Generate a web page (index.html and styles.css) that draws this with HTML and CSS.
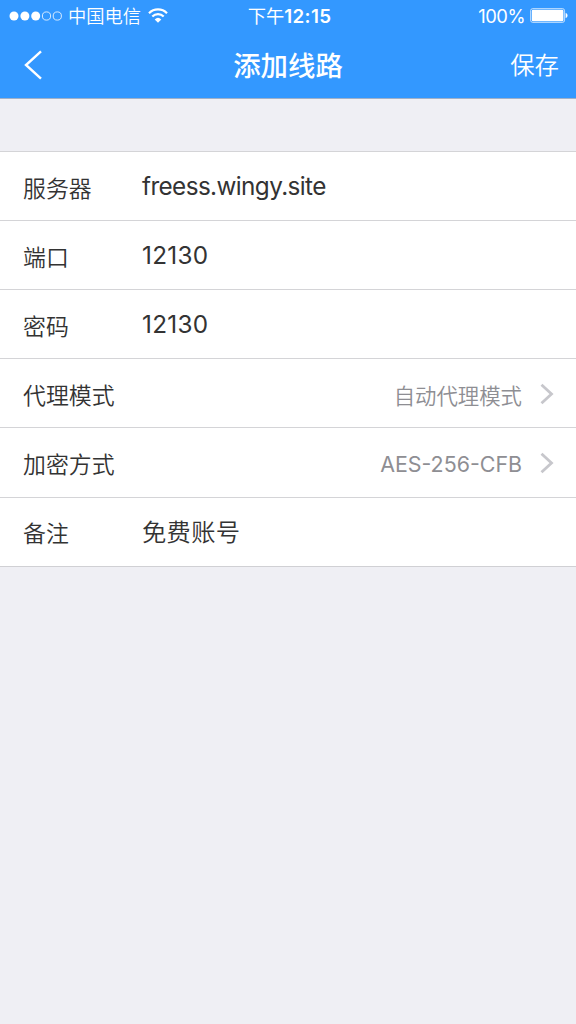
FILE: index.html
```html
<!DOCTYPE html>
<html lang="zh-CN">
<head>
<meta charset="utf-8">
<title>添加线路</title>
<link rel="stylesheet" href="styles.css">
</head>
<body>
<header class="header">
  <div class="status">
    <div class="carrier">
      <svg class="signal" width="54" height="12" viewBox="0 0 54 12">
        <g fill="#fff"><circle cx="5" cy="6" r="4.5"/><circle cx="15.9" cy="6" r="4.5"/><circle cx="26.7" cy="6" r="4.5"/></g>
        <g fill="none" stroke="#fff" stroke-width=".8"><circle cx="37.5" cy="6" r="4.1"/><circle cx="48.3" cy="6" r="4.1"/></g>
      </svg>
      <span class="carrier-name">中国电信</span>
      <svg class="wifi" width="20" height="16" viewBox="0 0 20 16">
        <g fill="none" stroke="#fff" stroke-width="2.2"><path d="M1 5.2a12.6 12.6 0 0 1 18 0"/><path d="M4.3 8.6a8 8 0 0 1 11.4 0"/></g>
        <path d="M6.7 11.4a4.8 4.8 0 0 1 6.6 0L10 14.7z" fill="#fff"/>
      </svg>
    </div>
    <div class="time"><span class="period">下午</span>12:15</div>
    <div class="power">
      <span class="percent">100%</span>
      <svg class="battery" width="38" height="16" viewBox="0 0 38 16">
        <rect x=".6" y=".6" width="34" height="13.8" rx="2.2" fill="none" stroke="#fff" stroke-opacity=".75" stroke-width=".9"/>
        <rect x="1.8" y="1.8" width="31.6" height="11.4" rx="1.2" fill="#fff"/>
        <path d="M35.6 5c2.6.5 2.6 4.5 0 5z" fill="#fff"/>
      </svg>
    </div>
  </div>
  <nav class="nav">
    <svg class="back" width="18" height="30" viewBox="0 0 18 30"><path d="M17 1.4 2 15l15 13.6" fill="none" stroke="#fff" stroke-width="2.4"/></svg>
    <h1 class="title">添加线路</h1>
    <span class="save">保存</span>
  </nav>
</header>
<main class="form">
  <div class="row"><span class="label">服务器</span><span class="value domain">freess.wingy.site</span></div>
  <div class="row"><span class="label">端口</span><span class="value">12130</span></div>
  <div class="row"><span class="label">密码</span><span class="value">12130</span></div>
  <div class="row"><span class="label">代理模式</span><span class="choice">自动代理模式</span><svg class="chevron" width="14" height="22" viewBox="0 0 14 22"><path d="M1.5 1.8 11.5 11l-10 9.2" fill="none" stroke="#c7c7cc" stroke-width="2.8"/></svg></div>
  <div class="row"><span class="label">加密方式</span><span class="choice cipher">AES-256-CFB</span><svg class="chevron" width="14" height="22" viewBox="0 0 14 22"><path d="M1.5 1.8 11.5 11l-10 9.2" fill="none" stroke="#c7c7cc" stroke-width="2.8"/></svg></div>
  <div class="row"><span class="label">备注</span><span class="value note">免费账号</span></div>
</main>
</body>
</html>
```
FILE: styles.css
```css
* { box-sizing: border-box; }
body {
  margin: 0;
  min-height: 1024px;
  background: #efeff4;
  color: #333;
  font-family: Inter, "Noto Sans CJK SC", sans-serif;
  font-weight: 400;
}
svg { display: block; flex: none; }
.header {
  height: 99px;
  background: #3398ff;
  border-bottom: 1px solid #a0b0c8;
  color: #fff;
}
.status {
  display: grid;
  grid-template-columns: 1fr auto 1fr;
  align-items: center;
  height: 32px;
  padding: 0 8px 1px 9px;
  line-height: 30px;
}
.carrier { display: flex; align-items: center; }
.carrier-name { margin-left: 5px; font-size: 18.3px; font-weight: 350; }
.wifi { margin-left: 7px; }
.time { padding: 1px 0 0 2px; font-weight: 600; font-size: 18.8px; letter-spacing: .35px; }
.period { font-weight: 400; font-size: 18.3px; letter-spacing: 0; }
.power { display: flex; align-items: center; justify-content: flex-end; gap: 5px; }
.percent { font-size: 18.4px; letter-spacing: -.5px; }
.nav {
  display: grid;
  grid-template-columns: 1fr auto 1fr;
  align-items: center;
  height: 66px;
  padding: 0 17px 0 24px;
}
.title { margin: 0; padding: 1px 7px 0 0; font-size: 27.4px; font-weight: 500; line-height: 40px; }
.save { justify-self: end; font-size: 24.4px; font-weight: 350; line-height: 40px; }
.form {
  margin-top: 52px;
  background: #fff;
  border-bottom: 1px solid #d0d0d4;
}
.row {
  display: flex;
  align-items: center;
  height: 69.12px;
  padding: 2px 22px 0 23px;
  border-top: 1px solid #d4d4d7;
}
.label { width: 119px; padding-top: 3px; font-size: 22.9px; font-weight: 350; line-height: 34px; }
.value { padding-bottom: 2px; font-size: 24.3px; line-height: 34px; letter-spacing: .3px; }
.domain { letter-spacing: -.6px; }
.note { font-weight: 350; }
.choice { margin-left: auto; padding-top: 3px; color: #8e8e93; font-size: 21.4px; font-weight: 350; line-height: 32px; }
.cipher { padding-top: 1px; font-weight: 400; }
.chevron { margin-left: 18px; }
```
